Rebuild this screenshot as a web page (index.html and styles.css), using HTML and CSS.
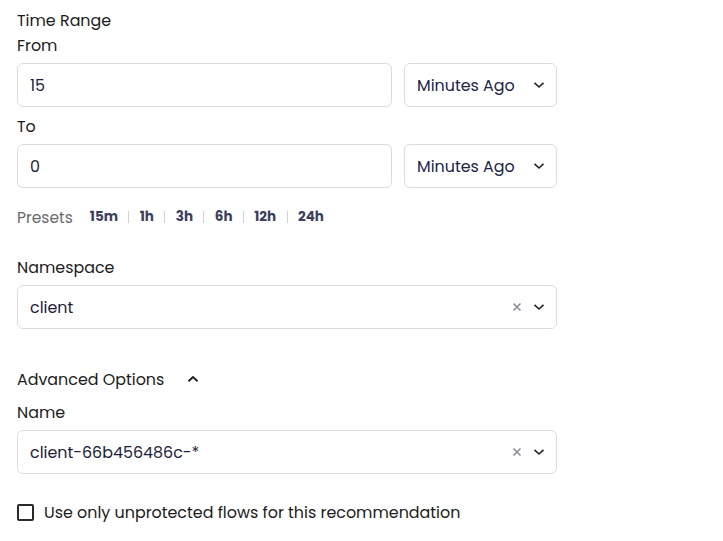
FILE: index.html
```html
<!DOCTYPE html>
<html>
<head>
<meta charset="utf-8">
<link rel="stylesheet" href="styles.css">
</head>
<body>
<div class="form">
  <div class="title">Time Range</div>
  <div class="label">From</div>
  <div class="row">
    <div class="input grow"><span class="val">15</span></div>
    <div class="input unit"><span class="val navy">Minutes Ago</span>
      <svg class="chev" width="12" height="8" viewBox="0 0 12 8"><path d="M1.5 1.8 L6 6 L10.5 1.8" fill="none" stroke="#222" stroke-width="1.6"/></svg>
    </div>
  </div>
  <div class="label to">To</div>
  <div class="row">
    <div class="input grow"><span class="val">0</span></div>
    <div class="input unit"><span class="val navy">Minutes Ago</span>
      <svg class="chev" width="12" height="8" viewBox="0 0 12 8"><path d="M1.5 1.8 L6 6 L10.5 1.8" fill="none" stroke="#222" stroke-width="1.6"/></svg>
    </div>
  </div>
  <div class="presets">
    <span class="plabel">Presets</span>
    <span class="preset">15m</span><span class="sep"></span>
    <span class="preset">1h</span><span class="sep"></span>
    <span class="preset">3h</span><span class="sep"></span>
    <span class="preset">6h</span><span class="sep"></span>
    <span class="preset">12h</span><span class="sep"></span>
    <span class="preset">24h</span>
  </div>
  <div class="title ns">Namespace</div>
  <div class="input full"><span class="val">client</span>
    <span class="icons">
      <svg width="10" height="10" viewBox="0 0 10 10"><path d="M1.5 1.5 L8.5 8.5 M8.5 1.5 L1.5 8.5" stroke="#8a8f99" stroke-width="1.6"/></svg>
      <svg width="12" height="8" viewBox="0 0 12 8"><path d="M1.5 1.8 L6 6 L10.5 1.8" fill="none" stroke="#222" stroke-width="1.6"/></svg>
    </span>
  </div>
  <div class="adv">
    <span>Advanced Options</span>
    <svg width="12" height="8" viewBox="0 0 12 8"><path d="M1.5 6.2 L6 2 L10.5 6.2" fill="none" stroke="#222" stroke-width="2"/></svg>
  </div>
  <div class="title name">Name</div>
  <div class="input full"><span class="val">client-66b456486c-*</span>
    <span class="icons">
      <svg width="10" height="10" viewBox="0 0 10 10"><path d="M1.5 1.5 L8.5 8.5 M8.5 1.5 L1.5 8.5" stroke="#8a8f99" stroke-width="1.6"/></svg>
      <svg width="12" height="8" viewBox="0 0 12 8"><path d="M1.5 1.8 L6 6 L10.5 1.8" fill="none" stroke="#222" stroke-width="1.6"/></svg>
    </span>
  </div>
  <label class="check">
    <span class="box"></span>
    <span>Use only unprotected flows for this recommendation</span>
  </label>
</div>
</body>
</html>
```
FILE: styles.css
```css
html, body {
  margin: 0;
  padding: 0;
  background: #fff;
}
body {
  font-family: "Poppins", "Open Sans", "Noto Sans", sans-serif;
  font-size: 15.9px;
  color: #1c1c1c;
}
.form {
  width: 540px;
  padding: 9px 17px 0 17px;
}
.title, .label {
  line-height: 24px;
  height: 24px;
}
.label {
  margin-top: 1px;
  margin-bottom: 5px;
}
.label.to {
  margin-top: 8px;
}
.row {
  display: flex;
  gap: 12px;
}
.input {
  box-sizing: border-box;
  height: 44px;
  border: 1px solid #dcdcdc;
  border-radius: 6px;
  display: flex;
  align-items: center;
  padding: 0 12px;
  background: #fff;
}
.grow { flex: 1; }
.unit {
  width: 153px;
  flex: none;
  justify-content: space-between;
  padding-right: 11px;
}
.val {
  color: #1e1e3c;
}
.val.navy { color: #1d2447; }
.chev { display: block; }
.presets {
  margin-top: 17px;
  height: 24px;
  display: flex;
  align-items: center;
}
.plabel {
  color: #6a6a6a;
  font-size: 15.5px;
  margin-right: 17px;
}
.preset {
  font-size: 13.5px;
  font-weight: 700;
  color: #3b3f5c;
}
.sep {
  width: 1px;
  height: 12px;
  background: #d4d4d8;
  margin: 0 10.4px;
}
.ns {
  margin-top: 27px;
  margin-bottom: 5px;
}
.full {
  justify-content: space-between;
  padding-right: 11px;
}
.icons {
  display: flex;
  align-items: center;
  gap: 11px;
}
.icons svg { display: block; }
.adv {
  margin-top: 38px;
  height: 24px;
  display: flex;
  align-items: center;
  gap: 23px;
}
.adv svg { display: block; }
.name {
  margin-top: 10px;
  margin-bottom: 5px;
}
.check {
  margin-top: 26px;
  height: 24px;
  display: flex;
  align-items: center;
  gap: 10px;
}
.box {
  box-sizing: border-box;
  width: 17px;
  height: 17px;
  border: 2px solid #2a2a2a;
  border-radius: 2px;
}
```
